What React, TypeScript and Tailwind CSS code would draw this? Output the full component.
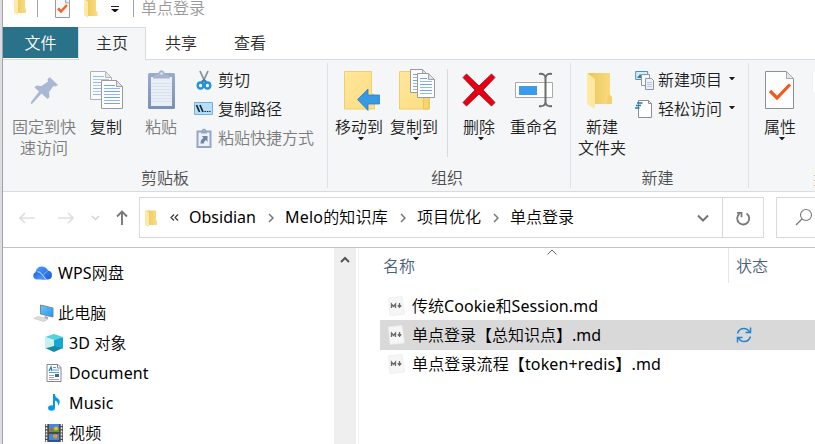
import type { ReactNode } from "react";

type SvgProps = { w: number; h: number; children: ReactNode; className?: string };

function Icon({ w, h, children, className = "" }: SvgProps) {
  return (
    <svg width={w} height={h} viewBox={`0 0 ${w} ${h}`} fill="none" className={`block shrink-0 ${className}`}>
      {children}
    </svg>
  );
}

function Gradients() {
  return (
    <svg width="0" height="0" className="absolute">
      <defs>
        <linearGradient id="fold" x1="0" y1="0" x2="1" y2="1">
          <stop offset="0" stopColor="#ffe79b" />
          <stop offset="1" stopColor="#fbdc80" />
        </linearGradient>
        <linearGradient id="foldBack" x1="0" y1="0" x2="1" y2="0">
          <stop offset="0" stopColor="#eac65a" />
          <stop offset="1" stopColor="#fbdc83" />
        </linearGradient>
        <linearGradient id="clip" x1="0" y1="0" x2="0" y2="1">
          <stop offset="0" stopColor="#9aabcb" />
          <stop offset="1" stopColor="#7b90b8" />
        </linearGradient>
        <linearGradient id="cloudBack" x1="0" y1="0" x2="1" y2="1">
          <stop offset="0" stopColor="#4a9cff" />
          <stop offset="1" stopColor="#1a5edb" />
        </linearGradient>
        <linearGradient id="cloudFront" x1="0" y1="0" x2="1" y2="1">
          <stop offset="0" stopColor="#1f62df" />
          <stop offset="1" stopColor="#57a6ff" />
        </linearGradient>
        <linearGradient id="screen" x1="0" y1="0" x2="1" y2="1">
          <stop offset="0" stopColor="#6cc4fb" />
          <stop offset="1" stopColor="#1d9bf0" />
        </linearGradient>
      </defs>
    </svg>
  );
}

function DropArrow({ className = "" }: { className?: string }) {
  return (
    <Icon w={6} h={3} className={className}>
      <path d="M0 0h6L3.500 3h-1z" fill="#1b1b1b" />
    </Icon>
  );
}

function SmallFolder() {
  return (
    <Icon w={13} h={18}>
      <path d="M1 1.500h10v9.500l1 1v4H1z" fill="url(#foldBack)" />
      <path d="M0 1l4 2.500V18l-4-2z" fill="#ffe9a6" />
    </Icon>
  );
}

function PinIcon() {
  return (
    <Icon w={40} h={40}>
      <path d="M25.500 7l8.500 8-2.500 1.500-2-.5-4.500 6 .5 5-2 2-6-5.500L8.500 33.500 7 34v-2l8-10.500-4.500-4 2-2 5 .5 6.500-4.500-.5-2z" fill="#aab9d3" />
    </Icon>
  );
}

function Page({ x, y, w, h, rows }: { x: number; y: number; w: number; h: number; rows: number }) {
  return (
    <g transform={`translate(${x} ${y})`}>
      <path d={`M.5.5h${w - 7}l6 6v${h - 7}H.5z`} fill="#fdfdfe" stroke="#9a9a9a" />
      <path d={`M${w - 6.5}.5v6h6z`} fill="#e3e3e3" stroke="#a3a3a3" />
      {Array.from({ length: rows }, (_, i) => (
        <path key={i} d={`M3 ${5.5 + i * 3}h${i < 1 ? w - 11 : w - 6}`} stroke={i % 2 ? "#8fb8f4" : "#6fa4f0"} />
      ))}
    </g>
  );
}

function CopyIcon() {
  return (
    <Icon w={40} h={40}>
      <g opacity=".75"><Page x={4} y={1} w={22} h={29} rows={7} /></g>
      <Page x={15} y={10} w={22} h={29} rows={7} />
    </Icon>
  );
}

function PasteIcon() {
  return (
    <Icon w={40} h={40}>
      <rect x="7" y="3" width="27" height="36" rx="1.500" fill="url(#clip)" />
      <path d="M10 7h21v29H10z" fill="#e9eef7" />
      <path d="M10 13.500h21M10 16.500h21M10 19.500h21M10 22.500h21M10 25.500h21M10 28.500h21M10 31.500h21" stroke="#dae2ef" />
      <path d="M12 8.500c0-3 2-4 5-4.500 1-5 6-5 7 0 3 .5 5 1.500 5 4.500z" fill="#a6b5d0" />
      <circle cx="20.500" cy="3.500" r="1.200" fill="#e4eaf4" />
    </Icon>
  );
}

function MoveIcon() {
  return (
    <Icon w={42} h={41}>
      <path d="M6.500 1.500h27V23l3 2v14h-30z" fill="url(#fold)" stroke="#efce6b" />
      <path d="M19.500 29.500L30 19v6h11.500v9H30v6.500z" fill="#3798e3" stroke="#2583cd" strokeWidth=".8" />
    </Icon>
  );
}

function CopyToIcon() {
  return (
    <Icon w={42} h={41} className="overflow-visible">
      <path d="M6.500 1.500h25V23l5 2v14h-30z" fill="url(#fold)" stroke="#efce6b" />
      <path d="M30.500 26h5.500v13h-5.500z" fill="#f7d46f" stroke="#eac45c" />
      <Page x={17} y={-1} w={19} h={24} rows={6} />
      <Page x={24} y={3} w={18} h={25} rows={6} />
    </Icon>
  );
}

function DeleteIcon() {
  return (
    <Icon w={40} h={40}>
      <path d="M4 7.500L7.500 4 20 16 32.500 4 36 7.500 24 20l12 12.500-3.500 3.500L20 24 7.500 36 4 32.500 16 20z" fill="#e60012" stroke="#a41520" strokeWidth=".9" />
    </Icon>
  );
}

function RenameIcon() {
  return (
    <Icon w={40} h={40}>
      <path d="M1.500 12.500h37v15h-37z" fill="#fff" stroke="#a9a9a9" />
      <path d="M5 16h18v9H5z" fill="#3a9bea" />
      <path d="M25 4q6-1 6.500 4q.5-5 6.500-4M31.500 7v26M25 36q6 1 6.500-4q.5 5 6.500 4" stroke="#6b6f6c" strokeWidth="2" />
    </Icon>
  );
}

function NewFolderIcon() {
  return (
    <Icon w={40} h={40}>
      <path d="M6 3h22v21l2 3v7H12z" fill="url(#foldBack)" />
      <path d="M5 3l8 6v30l-8-5z" fill="#ffe8a1" />
      <path d="M26 25l4 2v7h-5z" fill="#f5cf6a" />
    </Icon>
  );
}

function PropsIcon() {
  return (
    <Icon w={40} h={40}>
      <path d="M5.500 1.500h21l7 7v30h-28z" fill="#fdfdfd" stroke="#8f8f93" />
      <path d="M26.500 1.500v7h7z" fill="#e6e6e6" stroke="#a8a8a8" />
      <path d="M10 21l7 7L30 14.500" stroke="#f15a1c" strokeWidth="3.200" />
    </Icon>
  );
}

function BigButton({ icon, lines, width, drop, dim }: { icon: ReactNode; lines: string[]; width: string; drop?: boolean; dim?: boolean }) {
  return (
    <button className={`flex shrink-0 flex-col items-center pt-[10px] ${width} ${dim ? "text-[#7c7c7c]" : "text-[#1e1e1e]"}`}>
      <span className="h-[40px]">{icon}</span>
      <span className="mt-[7px] flex flex-col items-center whitespace-nowrap">
        {lines.map((l) => <span key={l} className="h-[21px] leading-[21px]">{l}</span>)}
      </span>
      {drop && <DropArrow className="-mt-px ml-1" />}
    </button>
  );
}

function SmallButton({ icon, label, dim, drop }: { icon: ReactNode; label: string; dim?: boolean; drop?: boolean }) {
  return (
    <button className={`flex h-[29px] items-center whitespace-nowrap ${dim ? "text-[#7c7c7c]" : "text-[#1e1e1e]"}`}>
      <span className="flex w-[23px] shrink-0 items-center">{icon}</span>
      {label}
      {drop && <DropArrow className="-mt-[3px] ml-[7px]" />}
    </button>
  );
}

function Group({ width, label, labelClass = "", children }: { width: string; label: string; labelClass?: string; children: ReactNode }) {
  return (
    <div className={`flex shrink-0 flex-col ${width}`}>
      <div className="flex h-[107px]">{children}</div>
      <div className={`h-[22px] text-center leading-[22px] text-[#4d4d4d] ${labelClass}`}>{label}</div>
    </div>
  );
}

function Divider() {
  return <div className="mt-[3px] h-[125px] w-px shrink-0 bg-[#dfe1e4]" />;
}

function Ribbon() {
  return (
    <div className="-mt-px flex h-[133px] shrink-0 border-y border-[#dadbdc] bg-[#f5f6f8]">
      <Group width="w-[324px]" label="剪贴板">
        <BigButton width="ml-[5px] w-[72px]" dim icon={<PinIcon />} lines={["固定到快", "速访问"]} />
        <BigButton width="w-[52px]" icon={<CopyIcon />} lines={["复制"]} />
        <BigButton width="w-[58px]" dim icon={<PasteIcon />} lines={["粘贴"]} />
        <div className="ml-[5px] flex flex-col pt-[5px]">
          <SmallButton
            label="剪切"
            icon={
              <Icon w={18} h={20}>
                <path d="M5 1l5.500 12M13 1L7.500 13" stroke="#8b9298" strokeWidth="1.800" />
                <ellipse cx="5.500" cy="15.500" rx="2.800" ry="3" stroke="#2792d5" strokeWidth="2.300" />
                <ellipse cx="12.500" cy="15.500" rx="2.800" ry="3" stroke="#2792d5" strokeWidth="2.300" />
                <path d="M6.500 12l2.500-2 2.500 2" stroke="#2a84bd" strokeWidth="2" />
              </Icon>
            }
          />
          <SmallButton
            label="复制路径"
            icon={
              <Icon w={19} h={13} className="-ml-px">
                <path d="M.5.5h18v12H.5z" fill="#b4defa" stroke="#7baed1" />
                <path d="M2.500 3l3 7M6 3l3 7" stroke="#17303f" strokeWidth="1.800" />
                <path d="M10.500 9.500h6" stroke="#17303f" strokeDasharray="1.500 .8" />
              </Icon>
            }
          />
          <SmallButton
            dim
            label="粘贴快捷方式"
            icon={
              <Icon w={18} h={20}>
                <path d="M2.500 3.500h4.500q2-4 4 0h4.500V19h-13z" fill="#eef1f8" stroke="#95a5c5" strokeWidth="2" />
                <path d="M6 3h6v2.500H6z" fill="#95a5c5" />
                <path d="M5.500 15.500q0-4.500 3-5.500L7 8h5.500v6l-1.500-2q-2 1-2.200 3.500z" fill="#6f83ad" />
              </Icon>
            }
          />
        </div>
      </Group>
      <Divider />
      <Group width="w-[242px]" label="组织" labelClass="pr-1">
        <BigButton width="ml-[3px] w-[56px]" drop icon={<MoveIcon />} lines={["移动到"]} />
        <BigButton width="w-[54px]" drop icon={<CopyToIcon />} lines={["复制到"]} />
        <div className="ml-[6px] mt-[9px] h-[88px] w-px bg-[#d9dadc]" />
        <BigButton width="ml-[3px] w-[56px]" drop icon={<DeleteIcon />} lines={["删除"]} />
        <BigButton width="w-[54px]" icon={<RenameIcon />} lines={["重命名"]} />
      </Group>
      <Divider />
      <Group width="w-[177px]" label="新建" labelClass="pr-1">
        <BigButton width="w-[62px]" icon={<NewFolderIcon />} lines={["新建", "文件夹"]} />
        <div className="ml-[2px] flex flex-col pt-[5px]">
          <SmallButton
            drop
            label="新建项目"
            icon={
              <Icon w={20} h={20}>
                <path d="M.7 1.500h12v8H.7z" fill="#d4edf9" stroke="#4a93b5" />
                <path d="M2 8l3-4 2 2 2-2 2 4z" fill="#387f9f" />
                <path d="M6.500 4.500h8v11h-8z" fill="#f8f9fb" stroke="#8f959b" />
                <path d="M10.500 8.500h6l2 2v9h-8z" fill="#eef0fa" stroke="#8f959b" />
                <path d="M12 12.500h5M12 14.500h5M12 16.500h5" stroke="#b8c4ea" />
              </Icon>
            }
          />
          <SmallButton
            drop
            label="轻松访问"
            icon={
              <Icon w={20} h={20}>
                <path d="M3.500 1.500h10l3 3v14h-13z" fill="#fff" stroke="#8b8f93" />
                <path d="M13.500 1.500v3h3" stroke="#8b8f93" />
                <path d="M2 4h5.500M1 6.500h5M0 9h4.500" stroke="#2878a8" strokeWidth="1.700" />
              </Icon>
            }
          />
        </div>
      </Group>
      <Divider />
      <BigButton width="ml-[3px] w-[56px]" drop icon={<PropsIcon />} lines={["属性"]} />
      <div className="ml-[4px] flex flex-col pt-[12px]">
        <div className="h-[20px] w-[3px] border-l border-[#f0f0f1] bg-white" />
        <Icon w={3} h={14} className="ml-[2px] mt-[82px]"><path d="M0 1.500h1M0 6.500h1M0 11.500h1" stroke="#d3a46e" /></Icon>
      </div>
    </div>
  );
}

function TitleBar() {
  return (
    <div className="flex h-[27px] shrink-0 items-start text-[#999]">
      <div className="ml-[11px] -mt-[3px]"><SmallFolder /></div>
      <div className="ml-[10px] h-[17px] w-px bg-[#a5a5a5]" />
      <div className="ml-[16px]">
        <Icon w={17} h={18}>
          <path d="M1.500-2v19.500h14V-2" fill="#f8f8f8" stroke="#9b9b9b" />
          <path d="M11.500-1v4h4" fill="#e2e2e2" stroke="#a9a9a9" />
          <path d="M4 8.500l3 3L13 5" stroke="#ef642c" strokeWidth="2.500" />
        </Icon>
      </div>
      <div className="ml-[13px]">
        <Icon w={14} h={18}>
          <path d="M1-1h11v12l1.500 1v4H1z" fill="url(#foldBack)" />
          <path d="M0-1l4 2.500V18l-4-3z" fill="#ffe9a6" />
        </Icon>
      </div>
      <div className="ml-[13px] mt-[6px]">
        <Icon w={8} h={6}><path d="M0 .5h8" stroke="#222" /><path d="M0 3h8L4 6.500z" fill="#111" /></Icon>
      </div>
      <div className="ml-[14px] h-[17px] w-px bg-[#a5a5a5]" />
      <div className="ml-[7px] leading-[16px]">单点登录</div>
    </div>
  );
}

function Tabs() {
  return (
    <div className="flex h-[33px] shrink-0 text-center leading-[32px] text-[#2b2b2b]">
      <div className="h-[31px] w-[75px] bg-[#2a7289] text-white">文件</div>
      <div className="z-10 w-[68px] border border-b-0 border-[#dadbdc] bg-[#f5f6f8] leading-[31px]">主页</div>
      <div className="w-[70px]">共享</div>
      <div className="w-[68px]">查看</div>
    </div>
  );
}

function Chevron() {
  return <Icon w={6} h={10}><path d="M1 1l4 4-4 4" stroke="#767676" strokeWidth="1.500" /></Icon>;
}

function AddressBar() {
  return (
    <div className="flex h-[56px] shrink-0 border-b border-[#c2c2c2] pt-[5px]">
      <div className="flex h-[41px] w-[136px] shrink-0 items-center">
        <Icon w={16} h={12} className="ml-[16px]"><path d="M6 1L1 6l5 5M1 6h14.500" stroke="#dedede" strokeWidth="1.700" /></Icon>
        <Icon w={16} h={12} className="ml-[23px]"><path d="M10 1l5 5-5 5M15 6H0" stroke="#dedede" strokeWidth="1.700" /></Icon>
        <Icon w={9} h={6} className="ml-[17px]"><path d="M1 1l3.500 3.500L8 1" stroke="#d2d2d2" strokeWidth="1.500" /></Icon>
        <Icon w={12} h={16} className="ml-[16px]"><path d="M1 6.500l5-5 5 5M6 1.500V15" stroke="#777" strokeWidth="1.900" /></Icon>
      </div>
      <div className="flex h-[41px] w-[625px] shrink-0 border border-[#d9d9d9] text-black">
        <div className="flex w-[583px] items-center whitespace-nowrap border-r border-[#d9d9d9] pl-[5px]">
          <SmallFolder />
          <Icon w={9} h={7} className="ml-[12px] -mt-px"><path d="M4 .5L1 3.500l3 3M8 .5L5 3.500l3 3" stroke="#333" strokeWidth="1.200" /></Icon>
          <span className="-mt-[2px] ml-[10px] w-[79px]">Obsidian</span>
          <Chevron />
          <span className="-mt-[2px] ml-[11px] w-[115px] tracking-[0.2px]">Melo的知识库</span>
          <Chevron />
          <span className="-mt-[2px] ml-[11px] w-[76px]">项目优化</span>
          <Chevron />
          <span className="-mt-[2px] ml-[11px]">单点登录</span>
          <Icon w={12} h={8} className="ml-auto mr-[13px]"><path d="M1 1.500l5 5 5-5" stroke="#737373" strokeWidth="2" /></Icon>
        </div>
        <div className="flex flex-1 items-center justify-center pt-[2px]">
          <Icon w={16} h={16}>
            <path d="M11.500 2.500A6 6 0 1 1 4.500 2.800" stroke="#777" strokeWidth="1.800" />
            <path d="M2 1.800h4.500v4.500" stroke="#777" strokeWidth="1.700" />
          </Icon>
        </div>
      </div>
      <div className="ml-[12px] flex h-[41px] flex-1 items-center overflow-hidden border border-r-0 border-[#d9d9d9] pl-[18px]">
        <Icon w={18} h={18} className="-mt-[2px]"><circle cx="11" cy="7" r="5.500" stroke="#77797c" strokeWidth="1.100" /><path d="M7 11l-6 6" stroke="#77797c" strokeWidth="1.300" /></Icon>
      </div>
    </div>
  );
}

function NavRow({ icon, label, indent }: { icon: ReactNode; label: string; indent?: boolean }) {
  return (
    <div className={`flex h-[30px] shrink-0 items-center whitespace-nowrap text-black ${indent ? "pl-[41px]" : "pl-[30px]"}`}>
      <span className="flex w-[25px] items-center">{icon}</span>
      <span className="tracking-[0.15px]">{label}</span>
    </div>
  );
}

function Sidebar() {
  return (
    <div className="flex w-[331px] shrink-0 flex-col overflow-hidden pt-[10px]">
      <NavRow
        label="WPS网盘"
        icon={
          <Icon w={20} h={14}>
            <path d="M2.500 6Q4 .5 8.500 .5q4.500 0 6.500 4 4 .5 4 4.500 0 4-4 4.500H9z" fill="url(#cloudBack)" />
            <path d="M.3 9.500q0-3.500 4-3.500 2.500 0 4 2l4.500 5.500H4.500Q.3 13.500.3 9.500z" fill="url(#cloudFront)" />
            <path d="M4.500 5.800q2.500 0 4 2l4.700 5.700" stroke="#e4efff" strokeWidth=".9" />
            <path d="M10.200 9.500Q11.500 6 14.500 5.500" stroke="#8cbcff" strokeWidth=".7" />
          </Icon>
        }
      />
      <div className="h-[10px] shrink-0" />
      <NavRow
        label="此电脑"
        icon={
          <Icon w={21} h={18}>
            <path d="M7.500 1l12.500 3v9L7.500 10z" fill="url(#screen)" stroke="#778894" />
            <path d="M12 12l3 1v2l-4-.5z" fill="#a3abb0" />
            <path d="M1 14.500l4-2 10 2.500-4 2.500z" fill="#dde0e2" stroke="#b8bdc0" strokeWidth=".6" />
          </Icon>
        }
      />
      <NavRow
        indent
        label="3D 对象"
        icon={
          <Icon w={20} h={20}>
            <path d="M1 4l9-3 9 3-9 3z" fill="#58cfdc" />
            <path d="M1 15l9-3 9 3-9 4z" fill="#178a9e" />
            <path d="M1 4l9 3v6l-9 2.500z" fill="#c9f0f1" />
            <path d="M19 4l-9 3v6l9 2.500z" fill="#17a6d1" />
          </Icon>
        }
      />
      <NavRow
        indent
        label="Document"
        icon={
          <Icon w={20} h={20}>
            <path d="M3 1.500h11l3 3v14H3z" fill="#fff" stroke="#85888b" />
            <path d="M13.500 1.500V5H17" stroke="#85888b" />
            <path d="M5 8l2-4 1 4" stroke="#207cc0" strokeWidth="1.300" />
            <path d="M9 4.500h3M9 7h6M5 9.500h10" stroke="#4ca2d9" />
            <path d="M5 12.500h5M5 14.500h5M5 16.500h10" stroke="#a4a7a9" />
            <path d="M11 11h4v3h-4z" fill="#386c94" />
          </Icon>
        }
      />
      <NavRow
        indent
        label="Music"
        icon={
          <Icon w={20} h={20}>
            <ellipse cx="7.500" cy="15" rx="3.400" ry="2.800" fill="#0795f2" />
            <path d="M9 1h2q0 3 3 4.500 3.500 3 0 7.500 .5-4.500-3-5.500v8H9z" fill="#0795f2" />
          </Icon>
        }
      />
      <NavRow
        indent
        label="视频"
        icon={
          <Icon w={20} h={20}>
            <path d="M1 1h18v18H1z" fill="#4a4a4a" />
            <path d="M2.500 1v18M17.500 1v18" stroke="#ececec" strokeWidth="1.600" strokeDasharray="2 1.200" />
            <path d="M5 1h10v8H5zM5 11h10v8H5z" fill="#4b87d8" />
            <path d="M5 7l3-2h7v4H5z" fill="#4ba548" />
            <circle cx="7.500" cy="6.500" r="1.500" fill="#e44a2e" />
            <circle cx="12" cy="5.500" r="2" fill="#f3b72f" />
            <path d="M9 12l3-1 2 2-2 3-3-2z" fill="#d79a2f" />
            <path d="M5 17h10v2H5z" fill="#275799" />
          </Icon>
        }
      />
    </div>
  );
}

function FileRow({ name, selected, tracking = "" }: { name: string; selected?: boolean; tracking?: string }) {
  return (
    <div className={`flex items-center whitespace-nowrap pl-[8px] text-black ${selected ? "h-[30px] bg-[#d9d9d9]" : "h-[28px]"}`}>
      <Icon w={18} h={20}>
        <path d="M.5 2L14 .5 16.500 18 2 19.500z" fill="#f6f6f6" stroke="#ebebeb" strokeWidth=".7" />
        <path d="M3.500 12V8l2 2.500 2-2.500v4M11.500 7v4M9.800 9.300l1.700 1.900 1.700-1.900" stroke="#686868" strokeWidth="1.300" />
      </Icon>
      <span className={`ml-[6px] w-[324px] ${tracking}`}>{name}</span>
      {selected && (
        <Icon w={16} h={16}>
          <path d="M1.500 6.500Q3 1.500 8 1.500q3.500 0 5.500 3.500M14.500.5v5h-5M14.500 9.500q-1.500 5-6.500 5-3.500 0-5.500-3.500M1.500 15.500v-5h5" stroke="#2484cf" strokeWidth="1.500" />
        </Icon>
      )}
    </div>
  );
}

function FileList() {
  return (
    <div className="ml-[2px] flex flex-1 flex-col overflow-hidden border-l border-[#eee]">
      <div className="flex h-[44px] shrink-0 text-[#4c607a]">
        <div className="flex w-[369px] pl-[24px]">
          <span className="w-[164px] pt-[6px]">名称</span>
          <Icon w={10} h={6} className="mt-[1px]"><path d="M.5 5.500L5 1l4.500 4.500" stroke="#666" /></Icon>
        </div>
        <div className="h-[35px] w-px bg-[#e5e5e5]" />
        <span className="pl-[7px] pt-[6px]">状态</span>
      </div>
      <div className="pl-[21px]">
        <FileRow name="传统Cookie和Session.md" tracking="tracking-[0.05px]" />
        <FileRow name="单点登录【总知识点】.md" selected />
        <FileRow name="单点登录流程【token+redis】.md" tracking="tracking-[0.13px]" />
      </div>
    </div>
  );
}

export default function App() {
  return (
    <div className="flex h-[444px] w-[815px] overflow-hidden bg-white font-['Noto_Sans','Noto_Sans_CJK_SC_DemiLight','Noto_Sans_CJK_SC',sans-serif] text-[16px] leading-[24px]">
      <Gradients />
      <div className="w-[3px] shrink-0 border-r border-[#a3a3a5] bg-[#dcdde0]" />
      <div className="flex w-[812px] shrink-0 flex-col overflow-hidden">
        <TitleBar />
        <Tabs />
        <Ribbon />
        <AddressBar />
        <div className="flex min-h-0 flex-1">
          <Sidebar />
          <div className="flex w-[22px] shrink-0 justify-center bg-[#efefef] pt-[8px]">
            <Icon w={10} h={7}><path d="M1 6l4-4 4 4" stroke="#555" strokeWidth="2" /></Icon>
          </div>
          <FileList />
        </div>
      </div>
    </div>
  );
}
